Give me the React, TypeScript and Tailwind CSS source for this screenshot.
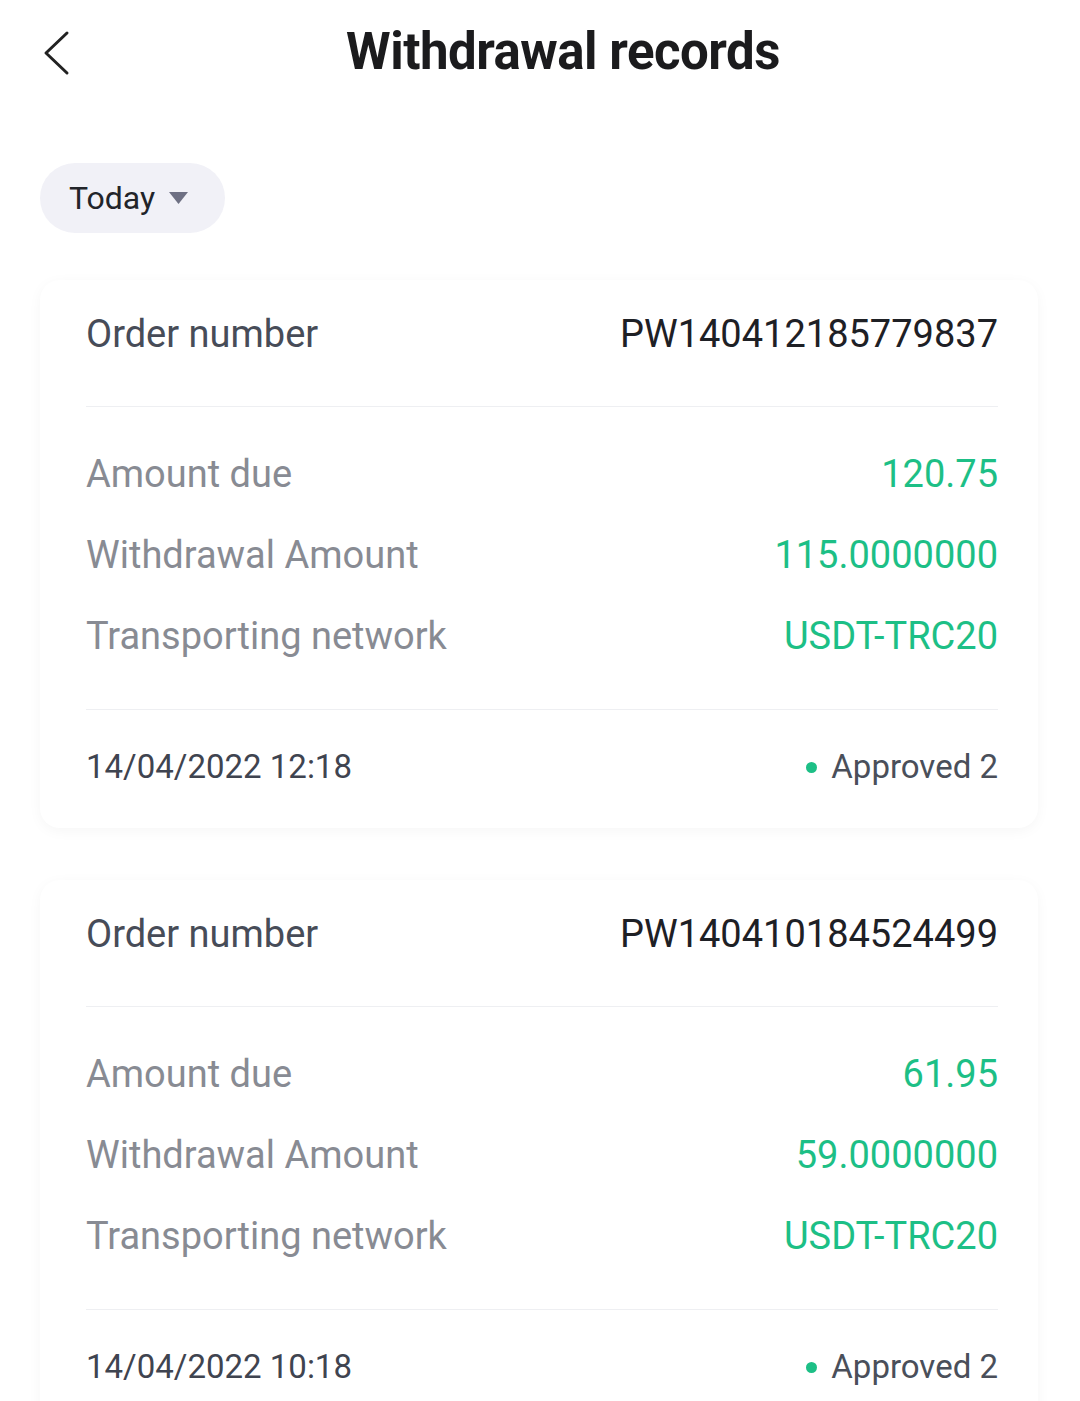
import React from 'react';

interface Record {
  order: string;
  due: string;
  amount: string;
  network: string;
  date: string;
  status: string;
}

const records: Record[] = [
  {
    order: 'PW140412185779837',
    due: '120.75',
    amount: '115.0000000',
    network: 'USDT-TRC20',
    date: '14/04/2022 12:18',
    status: 'Approved 2',
  },
  {
    order: 'PW140410184524499',
    due: '61.95',
    amount: '59.0000000',
    network: 'USDT-TRC20',
    date: '14/04/2022 10:18',
    status: 'Approved 2',
  },
];

const RecordCard: React.FC<{ r: Record }> = ({ r }) => (
  <div className="ml-[40px] mr-[42px] rounded-[20px] bg-white pl-[46px] pr-[40px] shadow-[0_3px_14px_rgba(0,0,0,0.04)]">
    <div className="flex h-[126px] items-start justify-between pt-[30px]">
      <span className="h-[48px] leading-[48px] text-[#474c58]">Order number</span>
      <span className="h-[48px] leading-[48px] text-[#1e2025]">{r.order}</span>
    </div>
    <div className="h-px bg-[#eeeff2]" />
    <div className="flex h-[302px] flex-col pt-[27px]">
      <div className="flex h-[81px] items-center justify-between">
        <span className="text-[#888b93]">Amount due</span>
        <span className="text-[#1dbf86]">{r.due}</span>
      </div>
      <div className="flex h-[81px] items-center justify-between">
        <span className="text-[#888b93]">Withdrawal Amount</span>
        <span className="text-[#1dbf86]">{r.amount}</span>
      </div>
      <div className="flex h-[81px] items-center justify-between">
        <span className="text-[#888b93]">Transporting network</span>
        <span className="text-[#1dbf86]">{r.network}</span>
      </div>
    </div>
    <div className="h-px bg-[#eeeff2]" />
    <div className="flex h-[118px] items-start justify-between pt-[33px] text-[33px]">
      <span className="h-[48px] leading-[48px] text-[#3f4450]">{r.date}</span>
      <span className="flex h-[48px] items-center gap-[14px] leading-[48px] text-[#4a4f5a]">
        <span className="h-[11px] w-[11px] rounded-full bg-[#1dbf86]" />
        {r.status}
      </span>
    </div>
  </div>
);

export default function App() {
  return (
    <div
      className="min-h-[1401px] w-[1080px] overflow-hidden bg-white text-[38px]"
      style={{ fontFamily: 'Roboto, "Liberation Sans", sans-serif' }}
    >
      <div className="relative flex h-[105px] items-center justify-center">
        <svg
          className="absolute left-[40px] top-[30px]"
          width="32"
          height="46"
          viewBox="0 0 32 46"
          fill="none"
        >
          <polyline
            points="27,3 6,23 27,43"
            stroke="#222"
            strokeWidth="3"
            strokeLinecap="round"
            strokeLinejoin="round"
          />
        </svg>
        <h1 className="ml-[46px] text-[51px] font-bold tracking-[-0.5px] text-[#1b1b1d]">
          Withdrawal records
        </h1>
      </div>
      <div className="px-[40px] pt-[58px]">
        <button className="flex h-[70px] w-[185px] items-center gap-[14px] rounded-full bg-[#f1f1f7] pl-[29px] text-[32px] text-[#222429]">
          Today
          <svg width="19" height="12" viewBox="0 0 19 12">
            <polygon points="0,0 19,0 9.5,12" fill="#6e7083" />
          </svg>
        </button>
      </div>
      <div className="flex flex-col gap-[52px] pt-[47px]">
        {records.map((r) => (
          <RecordCard key={r.order} r={r} />
        ))}
      </div>
    </div>
  );
}
